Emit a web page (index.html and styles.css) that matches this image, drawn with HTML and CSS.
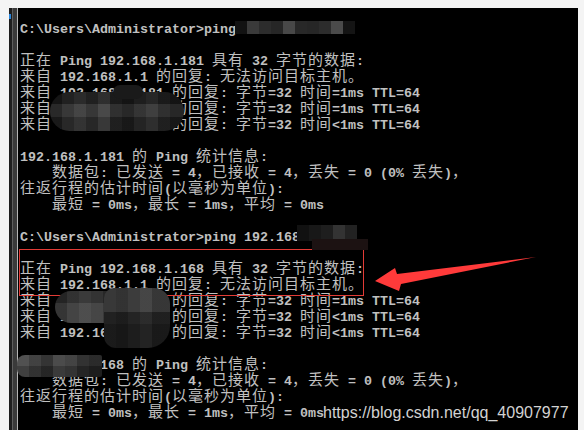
FILE: index.html
```html
<!DOCTYPE html>
<html>
  <head>
    <meta charset="utf-8">
    <title>ping</title>
    <link rel="stylesheet" href="styles.css">
  </head>
  <body>
    <div class="console">
      <div class="ln">C:\Users\Administrator&gt;ping 192.168.1.181</div>
      <div class="ln"></div>
      <div class="ln"><span class="c">正在</span> Ping 192.168.1.181 <span class="c">具有</span> 32 <span class="c">字节的数据</span>:</div>
      <div class="ln"><span class="c">来自</span> 192.168.1.1 <span class="c">的回复</span>: <span class="c">无法访问目标主机。</span></div>
      <div class="ln"><span class="c">来自</span> 192.168.1.181 <span class="c">的回复</span>: <span class="c">字节</span>=32 <span class="c">时间</span>=1ms TTL=64</div>
      <div class="ln"><span class="c">来自</span> 192.168.1.181 <span class="c">的回复</span>: <span class="c">字节</span>=32 <span class="c">时间</span>=1ms TTL=64</div>
      <div class="ln"><span class="c">来自</span> 192.168.1.181 <span class="c">的回复</span>: <span class="c">字节</span>=32 <span class="c">时间</span>&lt;1ms TTL=64</div>
      <div class="ln"></div>
      <div class="ln">192.168.1.181 <span class="c">的</span> Ping <span class="c">统计信息</span>:</div>
      <div class="ln">    <span class="c">数据包</span>: <span class="c">已发送</span> = 4<span class="c">，已接收</span> = 4<span class="c">，丢失</span> = 0 (0% <span class="c">丢失</span>)<span class="c">，</span></div>
      <div class="ln"><span class="c">往返行程的估计时间</span>(<span class="c">以毫秒为单位</span>):</div>
      <div class="ln">    <span class="c">最短</span> = 0ms<span class="c">，最长</span> = 1ms<span class="c">，平均</span> = 0ms</div>
      <div class="ln"></div>
      <div class="ln">C:\Users\Administrator&gt;ping 192.168.1.168</div>
      <div class="ln"></div>
      <div class="ln"><span class="c">正在</span> Ping 192.168.1.168 <span class="c">具有</span> 32 <span class="c">字节的数据</span>:</div>
      <div class="ln"><span class="c">来自</span> 192.168.1.1 <span class="c">的回复</span>: <span class="c">无法访问目标主机。</span></div>
      <div class="ln"><span class="c">来自</span> 192.168.1.168 <span class="c">的回复</span>: <span class="c">字节</span>=32 <span class="c">时间</span>=1ms TTL=64</div>
      <div class="ln"><span class="c">来自</span> 192.168.1.168 <span class="c">的回复</span>: <span class="c">字节</span>=32 <span class="c">时间</span>&lt;1ms TTL=64</div>
      <div class="ln"><span class="c">来自</span> 192.168.1.168 <span class="c">的回复</span>: <span class="c">字节</span>=32 <span class="c">时间</span>&lt;1ms TTL=64</div>
      <div class="ln"></div>
      <div class="ln">192.168.1.168 <span class="c">的</span> Ping <span class="c">统计信息</span>:</div>
      <div class="ln">    <span class="c">数据包</span>: <span class="c">已发送</span> = 4<span class="c">，已接收</span> = 4<span class="c">，丢失</span> = 0 (0% <span class="c">丢失</span>)<span class="c">，</span></div>
      <div class="ln"><span class="c">往返行程的估计时间</span>(<span class="c">以毫秒为单位</span>):</div>
      <div class="ln">    <span class="c">最短</span> = 0ms<span class="c">，最长</span> = 1ms<span class="c">，平均</span> = 0ms</div>
    </div>

    <!-- 红框 -->
    <div class="mark-box"></div>

    <!-- 马赛克 -->
    <div class="mosaic m1"></div>
    <div class="mosaic m2"></div>
    <div class="mosaic m2b"></div>
    <div class="mosaic m3"></div>
    <div class="mosaic m3b"></div>
    <div class="mosaic m4"></div>
    <div class="mosaic m4b"></div>
    <div class="mosaic m5"></div>

    <!-- 箭头 -->
    <svg class="arrow" width="584" height="430" viewBox="0 0 584 430">
      <polygon points="375,281 395,268 397,274 536,257 401,284 399,291" fill="#ff3a3a"/>
    </svg>

    <div class="watermark">https://blog.csdn.net/qq_40907977</div>
  </body>
</html>
```

FILE: styles.css
```css
html, body{
  margin: 0;
  padding: 0;
}
body{
  width: 584px;
  height: 430px;
  overflow: hidden;
  background: #f4f4f4;
}

/**** 控制台窗口 ****/
.console{
  position: relative;
  margin: 8px 0 0 9px;
  width: 569px;
  height: 422px;
  box-sizing: border-box;
  padding: 14px 0 0 11px;
  background: linear-gradient(to right, #1e1e1e 0 3px, #5e5e5e 3px 4px, #3a3a3a 4px 8px, #b4b4b4 8px 9px, #000 9px);
  color: #c0c0c0;
  font-family: "Liberation Mono", "Noto Sans CJK SC", monospace;
  font-size: 13.333px;
  font-weight: bold;
  line-height: 16px;
}
.console::before{
  content: "";
  position: absolute;
  left: 0;
  top: 6px;
  width: 2px;
  height: 5px;
  background: #2a86dc;
}
.ln{
  height: 16px;
  white-space: pre;
}
.c{
  font-family: "Noto Sans CJK SC", sans-serif;
  font-size: 15px;
  font-weight: 400;
  letter-spacing: 1px;
  line-height: 0;
}

/** 红框 **/
.mark-box{
  position: absolute;
  left: 19px;
  top: 249px;
  width: 343px;
  height: 45px;
  border: 1px solid #e23b36;
}

/** 马赛克 **/
.mosaic{
  position: absolute;
  filter: blur(0.7px);
}
.m1{
  left: 235px;
  top: 21px;
  width: 120px;
  height: 13px;
  background: linear-gradient(to right, #121212 0 12px, #3a3a3a 12px 24px, #2c2c2c 24px 36px, #262626 36px 48px, #484848 48px 60px, #282828 60px 72px, #262626 72px 84px, #2c2c2c 84px 96px, #4a4a4a 96px 108px, #141414 108px 120px);
}
.m2{
  left: 50px;
  top: 92px;
  width: 134px;
  height: 39px;
  border-radius: 20px;
  background:
    linear-gradient(to bottom, rgba(0,0,0,.25) 0 12px, rgba(255,255,255,.06) 12px 25px, rgba(0,0,0,.1) 25px),
    linear-gradient(to right, #1c1c1c 0 12px, #2c2c2c 12px 24px, #393939 24px 36px, #2b2b2b 36px 48px, #3e3e3e 48px 60px, #232323 60px 72px, #1b1b1b 72px 84px, #282828 84px 96px, #333 96px 108px, #232323 108px 120px, #1a1a1a 120px);
}
.m2b{
  left: 113px;
  top: 85px;
  width: 30px;
  height: 14px;
  border-radius: 7px;
  background: #1a1a1a;
}
.m3{
  left: 297px;
  top: 225px;
  width: 60px;
  height: 16px;
  background: linear-gradient(to right, #111 0 12px, #181818 12px 24px, #1e1e1e 24px 36px, #333 36px 48px, #222 48px);
}
.m3b{
  left: 312px;
  top: 239px;
  width: 56px;
  height: 11px;
  background: #1c1212;
}
.m4{
  left: 55px;
  top: 291px;
  width: 112px;
  height: 32px;
  border-radius: 16px 6px 6px 16px;
  background:
    linear-gradient(to bottom, rgba(0,0,0,.15) 0 12px, rgba(255,255,255,.05) 12px),
    linear-gradient(to right, #2a2a2a 0 12px, #3a3a3a 12px 24px, #444 24px 36px, #3c3c3c 36px 48px, #2e2e2e 48px 60px, #262626 60px);
}
.m4b{
  left: 104px;
  top: 288px;
  width: 66px;
  height: 60px;
  border-radius: 10px 16px 22px 12px;
  background:
    linear-gradient(to bottom, rgba(255,255,255,.06) 0 24px, rgba(0,0,0,.25) 24px 36px, rgba(0,0,0,.4) 36px),
    linear-gradient(to right, #2c2c2c 0 12px, #262626 12px 24px, #303030 24px 36px, #3a3a3a 36px 48px, #2a2a2a 48px);
}
.m5{
  left: 17px;
  top: 355px;
  width: 85px;
  height: 22px;
  border-radius: 8px 2px 2px 8px;
  background:
    linear-gradient(to bottom, rgba(255,255,255,.04) 0 11px, rgba(0,0,0,.15) 11px),
    linear-gradient(to right, #4a4a4a 0 12px, #3a3a3a 12px 24px, #2c2c2c 24px 36px, #444 36px 48px, #3c3c3c 48px 60px, #2a2a2a 60px 72px, #222 72px);
}

/** 箭头 **/
.arrow{
  position: absolute;
  left: 0;
  top: 0;
}

/** 水印 **/
.watermark{
  position: absolute;
  left: 323px;
  top: 405px;
  font-family: "Liberation Sans", Arial, sans-serif;
  font-size: 16px;
  line-height: 16px;
  color: #d2d2d2;
  white-space: nowrap;
}
```
